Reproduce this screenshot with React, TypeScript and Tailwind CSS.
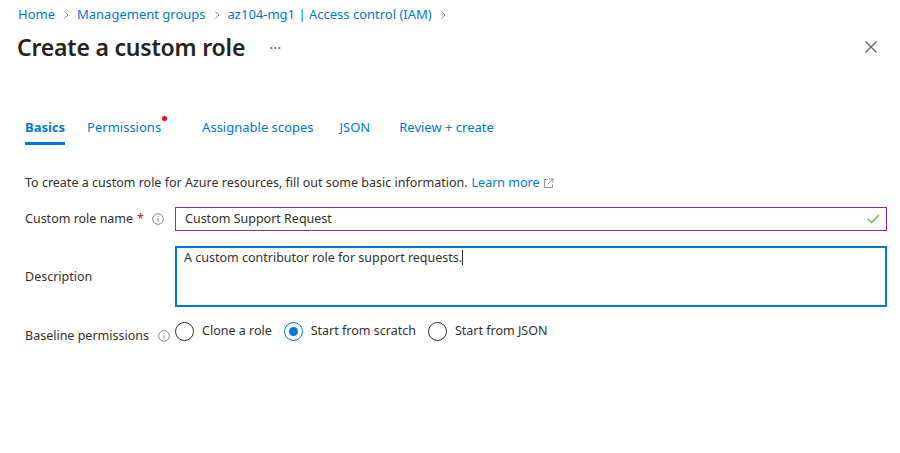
import React from "react";

const Chevron = () => (
  <svg width="10" height="10" viewBox="0 0 10 10" className="mx-[6px]">
    <path d="M3.5 1.5 L7 5 L3.5 8.5" fill="none" stroke="#8a8886" strokeWidth="1" />
  </svg>
);

const Info = () => (
  <svg width="12" height="12" viewBox="0 0 12 12">
    <circle cx="6" cy="6" r="5.3" fill="none" stroke="#8a8886" strokeWidth="1" />
    <rect x="5.5" y="5" width="1" height="3.6" fill="#8a8886" />
    <rect x="5.5" y="3" width="1" height="1" fill="#8a8886" />
  </svg>
);

const Radio = ({ checked, label }: { checked?: boolean; label: string }) => (
  <div className="flex items-center gap-[8px]">
    <div
      className={
        "w-[19px] h-[19px] rounded-full border flex items-center justify-center " +
        (checked ? "border-[#0078d4]" : "border-[#323130]")
      }
    >
      {checked && <div className="w-[9px] h-[9px] rounded-full bg-[#0078d4]" />}
    </div>
    <span>{label}</span>
  </div>
);

const tabs = [
  { t: "Basics", m: "mr-[22px]" },
  { t: "Permissions", m: "mr-[41px]" },
  { t: "Assignable scopes", m: "mr-[26px]" },
  { t: "JSON", m: "mr-[29px]" },
  { t: "Review + create", m: "" },
];

export default function App() {
  return (
    <div className="w-[900px] h-[453px] bg-white text-[#323130] text-[13px] font-['Segoe_UI','Noto_Sans',sans-serif] relative overflow-hidden">
      {/* breadcrumb */}
      <div className="flex items-center pl-[18px] pt-[5px] h-[24px] text-[#0078d4]">
        <span>Home</span>
        <Chevron />
        <span>Management groups</span>
        <Chevron />
        <span>az104-mg1 | Access control (IAM)</span>
        <Chevron />
      </div>

      {/* title */}
      <div className="flex items-center pl-[17px] pr-[22px] h-[46px]">
        <h1 className="text-[23px] font-semibold text-[#252423] tracking-[-0.2px]">Create a custom role</h1>
        <span className="ml-[24px] text-[#605e5c] text-[15px] mt-[1px]">···</span>
        <div className="flex-1" />
        <svg width="14" height="14" viewBox="0 0 14 14">
          <path d="M1.5 1.5 L12.5 12.5 M12.5 1.5 L1.5 12.5" stroke="#605e5c" strokeWidth="1.2" />
        </svg>
      </div>

      {/* tabs */}
      <div className="flex items-start pl-[25px] mt-[48px] h-[27px]">
        {tabs.map((x, i) => (
          <div key={x.t} className={"relative flex flex-col h-full text-[#0078d4] " + x.m}>
            <span className={i === 0 ? "font-bold" : ""}>{x.t}</span>
            {i === 0 && <div className="h-[3px] bg-[#0078d4] mt-auto" />}
            {i === 1 && (
              <div className="absolute -right-[6px] top-[-2px] w-[5px] h-[5px] rounded-full bg-[#ff0000]" />
            )}
          </div>
        ))}
      </div>

      <div className="text-[12.5px]">
        {/* intro */}
        <div className="pl-[25px] mt-[29px] flex items-center">
          <span>To create a custom role for Azure resources, fill out some basic information.</span>
          <span className="text-[#0078d4] ml-[4px]">Learn more</span>
          <svg width="11" height="11" viewBox="0 0 11 11" className="ml-[3px]">
            <path d="M4.5 1.5 H1.5 V9.5 H9.5 V6.5" fill="none" stroke="#8a8886" strokeWidth="0.9" />
            <path d="M6 1 H10 V5 M10 1 L5 6" fill="none" stroke="#8a8886" strokeWidth="0.9" />
          </svg>
        </div>

        {/* form */}
        <div className="pl-[25px] pr-[13px] mt-[14px] flex flex-col">
          <div className="flex items-center h-[24px]">
            <div className="w-[150px] flex items-center pt-[1px]">
              <span>Custom role name</span>
              <span className="text-[#a4262c] ml-[4px]">*</span>
              <span className="ml-[8px] flex">
                <Info />
              </span>
            </div>
            <div className="flex-1 h-[24px] border border-[#8e2ca8] flex items-center pl-[9px] pr-[6px] pt-[1px]">
              <span className="flex-1">Custom Support Request</span>
              <svg width="13" height="10" viewBox="0 0 13 10">
                <path d="M1 5 L4.5 8.5 L12 1" fill="none" stroke="#6bb03a" strokeWidth="1.3" />
              </svg>
            </div>
          </div>

          <div className="flex items-center mt-[15px]">
            <div className="w-[150px] pt-[2px]">Description</div>
            <div className="flex-1 h-[61px] border-2 border-[#0078d4] pl-[7px] pt-[1px]">
              <span>A custom contributor role for support requests.</span>
              <span className="inline-block w-[1px] h-[15px] bg-[#323130] align-middle -mt-[2px]" />
            </div>
          </div>

          <div className="flex items-center mt-[14px] h-[22px]">
            <div className="w-[150px] flex items-center self-end translate-y-[3px]">
              <span>Baseline permissions</span>
              <span className="ml-[9px] flex">
                <Info />
              </span>
            </div>
            <div className="flex items-center gap-[12px]">
              <Radio label="Clone a role" />
              <Radio checked label="Start from scratch" />
              <Radio label="Start from JSON" />
            </div>
          </div>
        </div>
      </div>
    </div>
  );
}
